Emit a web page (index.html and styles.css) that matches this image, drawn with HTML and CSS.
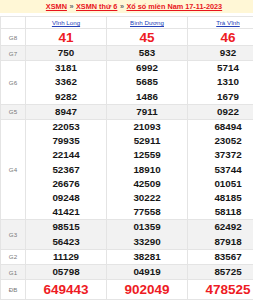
FILE: index.html
```html
<!DOCTYPE html>
<html lang="vi">
<head>
<meta charset="utf-8">
<title>XSMN thứ 6</title>
<link rel="stylesheet" href="styles.css">
</head>
<body>
<div class="page">
  <div class="crumb">
    <a href="#">XSMN</a><span class="sep">»</span><a href="#">XSMN thứ 6</a><span class="sep">»</span><a href="#">Xổ số miền Nam 17-11-2023</a>
  </div>
  <table class="kq">
    <colgroup>
      <col class="c-lbl"><col class="c-prov"><col class="c-prov"><col class="c-prov">
    </colgroup>
    <tr class="head">
      <th></th>
      <th><a href="#">Vĩnh Long</a></th>
      <th><a href="#">Bình Dương</a></th>
      <th><a href="#">Trà Vĩnh</a></th>
    </tr>
    <tr class="g8">
      <td class="lbl">G8</td>
      <td class="big">41</td>
      <td class="big">45</td>
      <td class="big">46</td>
    </tr>
    <tr class="alt">
      <td class="lbl">G7</td>
      <td class="num"><div>750</div></td>
      <td class="num"><div>583</div></td>
      <td class="num"><div>932</div></td>
    </tr>
    <tr>
      <td class="lbl">G6</td>
      <td class="num"><div>3181</div><div>3362</div><div>9282</div></td>
      <td class="num"><div>6992</div><div>5685</div><div>1486</div></td>
      <td class="num"><div>5714</div><div>1310</div><div>1679</div></td>
    </tr>
    <tr class="alt">
      <td class="lbl">G5</td>
      <td class="num"><div>8947</div></td>
      <td class="num"><div>7911</div></td>
      <td class="num"><div>0922</div></td>
    </tr>
    <tr>
      <td class="lbl">G4</td>
      <td class="num"><div>22053</div><div>79935</div><div>22144</div><div>52367</div><div>26676</div><div>09248</div><div>41421</div></td>
      <td class="num"><div>21093</div><div>52911</div><div>12559</div><div>18910</div><div>42509</div><div>30222</div><div>77558</div></td>
      <td class="num"><div>68494</div><div>23052</div><div>37372</div><div>53744</div><div>01051</div><div>48185</div><div>58118</div></td>
    </tr>
    <tr class="alt">
      <td class="lbl">G3</td>
      <td class="num"><div>98515</div><div>56423</div></td>
      <td class="num"><div>01359</div><div>33290</div></td>
      <td class="num"><div>62492</div><div>87918</div></td>
    </tr>
    <tr>
      <td class="lbl">G2</td>
      <td class="num"><div>11129</div></td>
      <td class="num"><div>38281</div></td>
      <td class="num"><div>83567</div></td>
    </tr>
    <tr class="alt">
      <td class="lbl">G1</td>
      <td class="num"><div>05798</div></td>
      <td class="num"><div>04919</div></td>
      <td class="num"><div>85725</div></td>
    </tr>
    <tr class="db">
      <td class="lbl">ĐB</td>
      <td class="big">649443</td>
      <td class="big">902049</td>
      <td class="big">478525</td>
    </tr>
  </table>
</div>
</body>
</html>
```

FILE: styles.css
```css
html, body {
  margin: 0;
  padding: 0;
  background: #fff;
}
body {
  font-family: "Liberation Sans", Arial, sans-serif;
  color: #111;
  overflow: hidden;
}
.page {
  width: 268px;
}
.crumb {
  height: 13px;
  line-height: 13px;
  background: #fff7d6;
  text-align: center;
  font-size: 7.3px;
  font-weight: bold;
  white-space: nowrap;
}
.crumb a {
  color: #e8141c;
  text-decoration: underline;
}
.crumb .sep {
  color: #666;
  margin: 0 2.5px;
}
.kq {
  margin-top: 3px;
  width: 268px;
  border-collapse: collapse;
  table-layout: fixed;
}
.c-lbl { width: 25px; }
.c-prov { width: 81px; }
.kq th, .kq td {
  border: 1px solid #e4e4e4;
  padding: 0;
  text-align: center;
  vertical-align: middle;
}
.kq tr.head th {
  height: 11px;
  font-size: 6.2px;
  font-weight: normal;
  line-height: 11px;
}
.kq tr.head a {
  color: #2440b8;
  text-decoration: underline;
}
.lbl {
  font-size: 6.2px;
  color: #777;
}
.num {
  font-size: 9.8px;
  font-weight: bold;
  line-height: 14.2px;
  color: #161616;
}
.big {
  font-size: 13.5px;
  font-weight: bold;
  color: #ee1b24;
}
.g8 td {
  height: 16px;
}
.db td {
  height: 19px;
}
.alt td {
  background: #f2f2f2;
}
```
